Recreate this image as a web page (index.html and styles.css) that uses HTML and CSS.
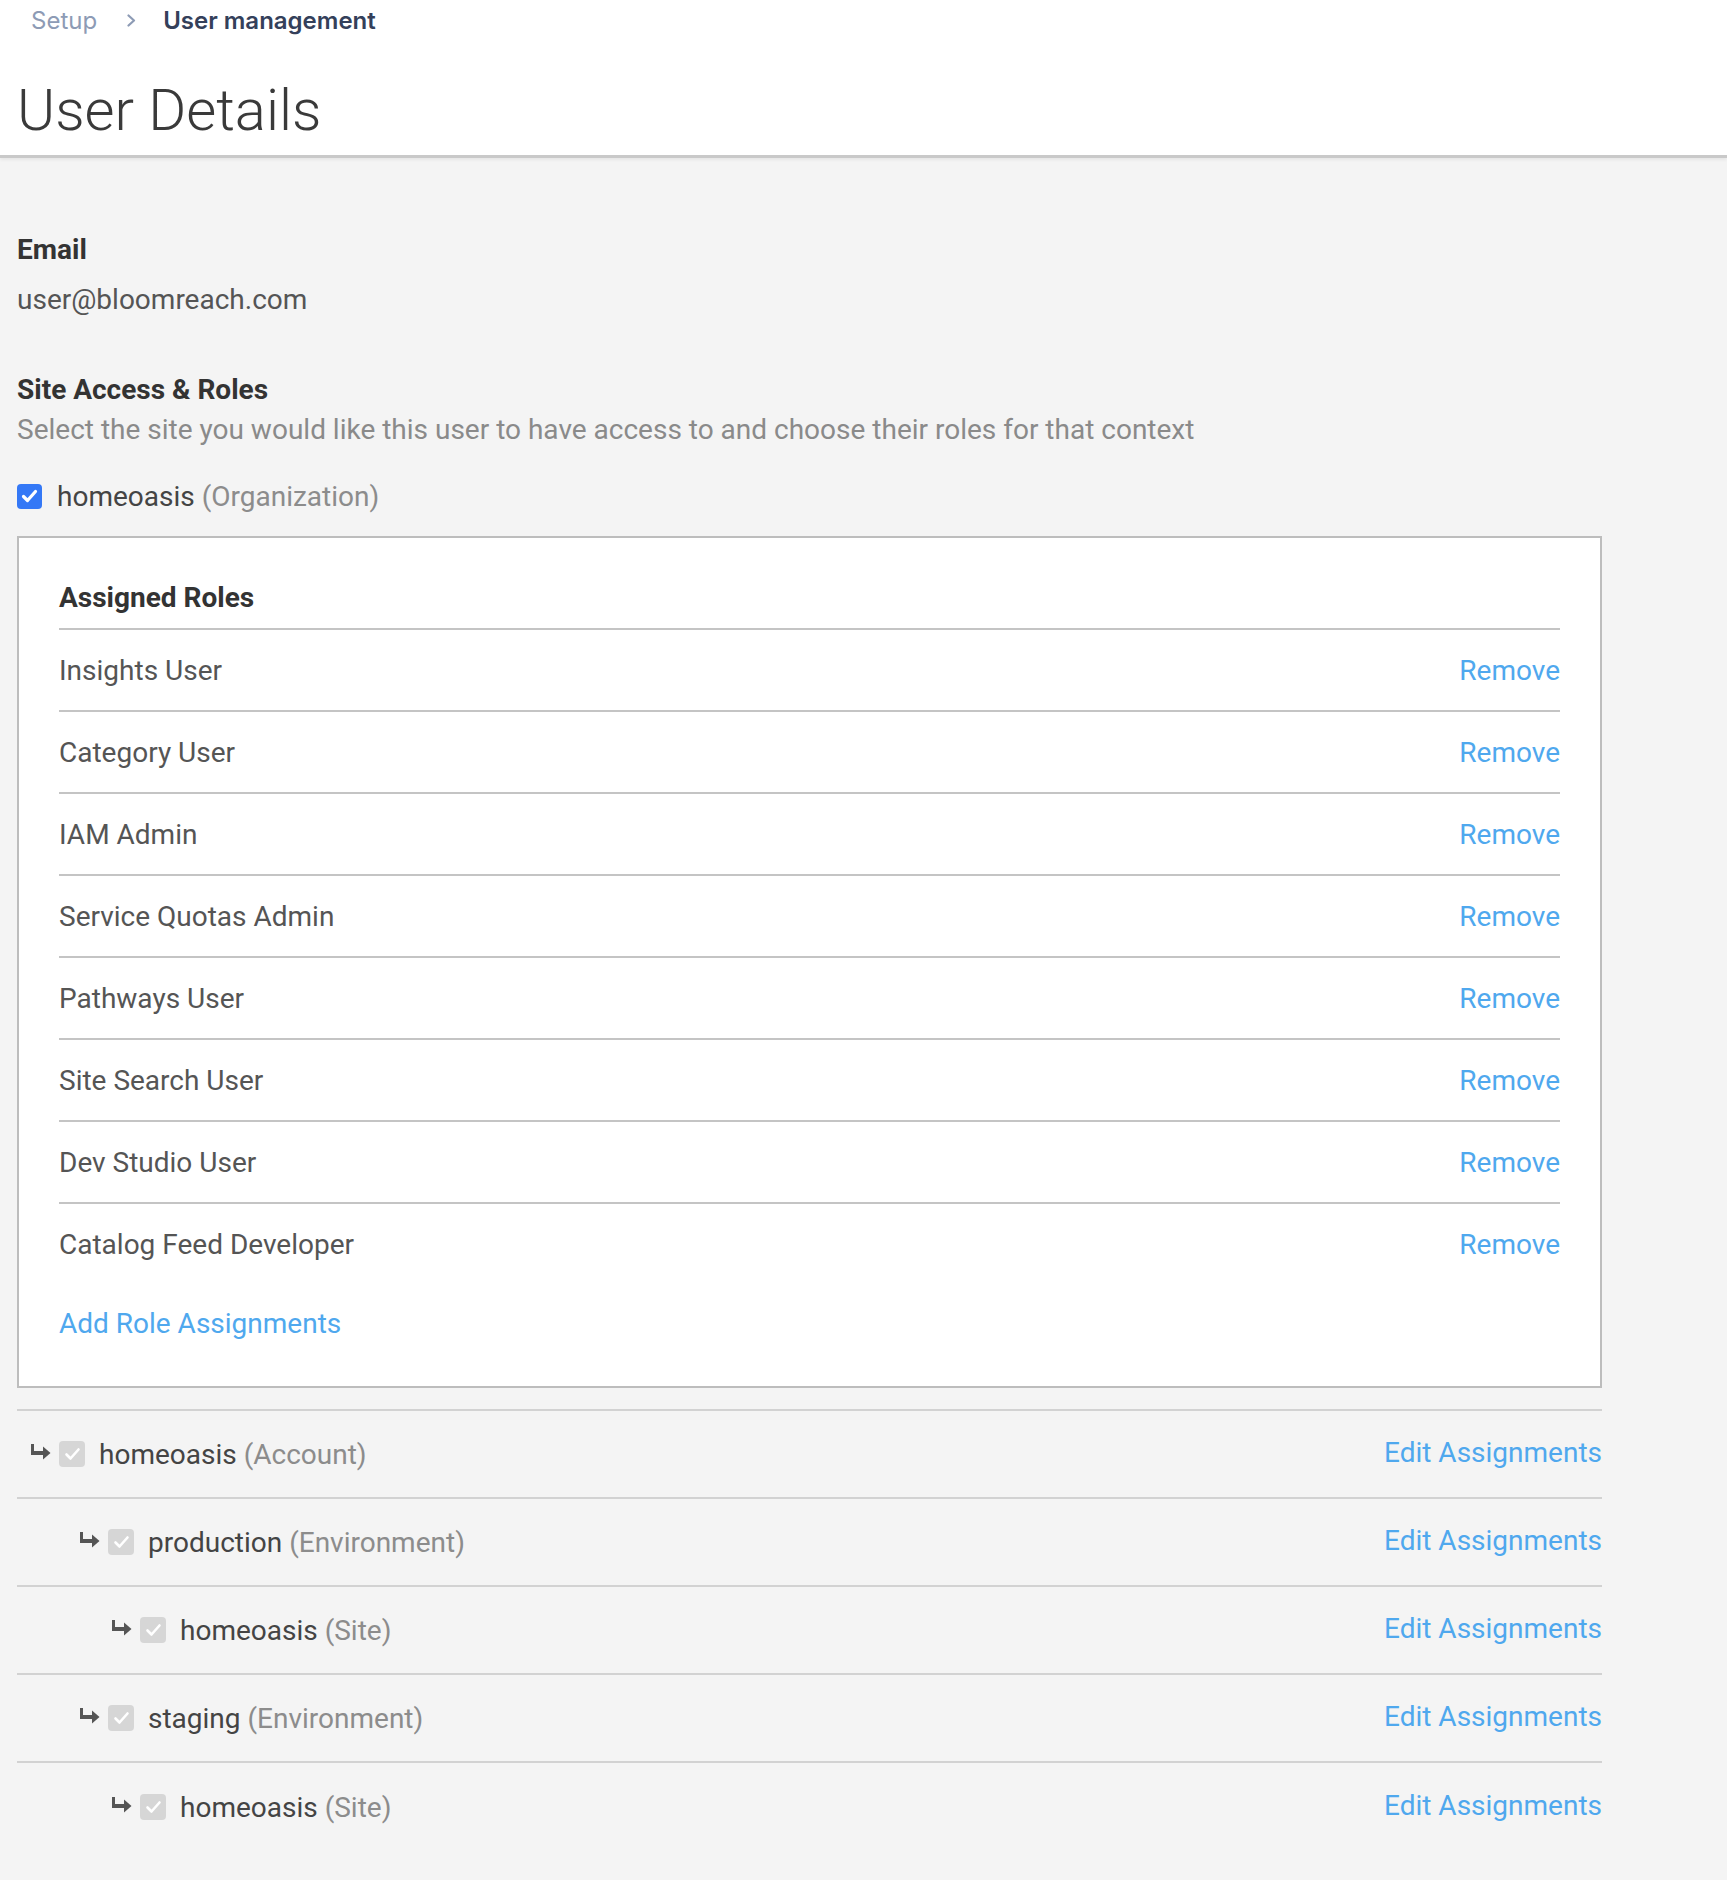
FILE: index.html
```html
<!DOCTYPE html>
<html lang="en">
<head>
<meta charset="utf-8">
<title>User Details</title>
<link rel="stylesheet" href="styles.css">
</head>
<body>
<header class="page-header">
  <nav class="breadcrumb">
    <span class="crumb">Setup</span>
    <svg class="crumb-sep" width="9" height="13" viewBox="0 0 9 13"><polyline points="1.5,1.5 7,6.5 1.5,11.5" fill="none" stroke="#8d9bb5" stroke-width="2.2" stroke-linecap="round" stroke-linejoin="round"/></svg>
    <span class="crumb current">User management</span>
  </nav>
  <h1 class="page-title">User Details</h1>
</header>

<main class="content">
  <section class="field">
    <h2 class="label">Email</h2>
    <p class="value">user@bloomreach.com</p>
  </section>

  <section class="access">
    <h2 class="label">Site Access &amp; Roles</h2>
    <p class="hint">Select the site you would like this user to have access to and choose their roles for that context</p>

    <div class="org-row">
      <span class="check check-on">
        <svg width="17" height="14" viewBox="0 0 17 14"><polyline points="2.5,7.5 6.5,11.5 14.5,2.5" fill="none" stroke="#fff" stroke-width="3.2" stroke-linecap="round" stroke-linejoin="round"/></svg>
      </span>
      <span class="name">homeoasis <span class="kind">(Organization)</span></span>
    </div>

    <div class="roles-box">
      <h3 class="roles-title">Assigned Roles</h3>
      <ul class="roles">
        <li class="role"><span>Insights User</span><a class="link">Remove</a></li>
        <li class="role"><span>Category User</span><a class="link">Remove</a></li>
        <li class="role"><span>IAM Admin</span><a class="link">Remove</a></li>
        <li class="role"><span>Service Quotas Admin</span><a class="link">Remove</a></li>
        <li class="role"><span>Pathways User</span><a class="link">Remove</a></li>
        <li class="role"><span>Site Search User</span><a class="link">Remove</a></li>
        <li class="role"><span>Dev Studio User</span><a class="link">Remove</a></li>
        <li class="role"><span>Catalog Feed Developer</span><a class="link">Remove</a></li>
      </ul>
      <a class="link add-link">Add Role Assignments</a>
    </div>

    <ul class="tree">
      <li class="tree-row level-1">
        <div class="tree-item">
          <svg class="branch" width="20" height="16" viewBox="0 0 20 16"><rect x="0" y="0" width="3" height="11" fill="#555"/><rect x="0" y="7" width="13" height="4" fill="#555"/><polygon points="12,2.5 19.5,9 12,15.5" fill="#555"/></svg>
          <span class="check check-off"><svg width="17" height="14" viewBox="0 0 17 14"><polyline points="2.5,7.5 6.5,11.5 14.5,2.5" fill="none" stroke="#fff" stroke-width="2.6" stroke-linecap="round" stroke-linejoin="round"/></svg></span>
          <span class="name">homeoasis <span class="kind">(Account)</span></span>
        </div>
        <a class="link edit-link">Edit Assignments</a>
      </li>
      <li class="tree-row level-2">
        <div class="tree-item">
          <svg class="branch" width="20" height="16" viewBox="0 0 20 16"><rect x="0" y="0" width="3" height="11" fill="#555"/><rect x="0" y="7" width="13" height="4" fill="#555"/><polygon points="12,2.5 19.5,9 12,15.5" fill="#555"/></svg>
          <span class="check check-off"><svg width="17" height="14" viewBox="0 0 17 14"><polyline points="2.5,7.5 6.5,11.5 14.5,2.5" fill="none" stroke="#fff" stroke-width="2.6" stroke-linecap="round" stroke-linejoin="round"/></svg></span>
          <span class="name">production <span class="kind">(Environment)</span></span>
        </div>
        <a class="link edit-link">Edit Assignments</a>
      </li>
      <li class="tree-row level-3">
        <div class="tree-item">
          <svg class="branch" width="20" height="16" viewBox="0 0 20 16"><rect x="0" y="0" width="3" height="11" fill="#555"/><rect x="0" y="7" width="13" height="4" fill="#555"/><polygon points="12,2.5 19.5,9 12,15.5" fill="#555"/></svg>
          <span class="check check-off"><svg width="17" height="14" viewBox="0 0 17 14"><polyline points="2.5,7.5 6.5,11.5 14.5,2.5" fill="none" stroke="#fff" stroke-width="2.6" stroke-linecap="round" stroke-linejoin="round"/></svg></span>
          <span class="name">homeoasis <span class="kind">(Site)</span></span>
        </div>
        <a class="link edit-link">Edit Assignments</a>
      </li>
      <li class="tree-row level-2">
        <div class="tree-item">
          <svg class="branch" width="20" height="16" viewBox="0 0 20 16"><rect x="0" y="0" width="3" height="11" fill="#555"/><rect x="0" y="7" width="13" height="4" fill="#555"/><polygon points="12,2.5 19.5,9 12,15.5" fill="#555"/></svg>
          <span class="check check-off"><svg width="17" height="14" viewBox="0 0 17 14"><polyline points="2.5,7.5 6.5,11.5 14.5,2.5" fill="none" stroke="#fff" stroke-width="2.6" stroke-linecap="round" stroke-linejoin="round"/></svg></span>
          <span class="name">staging <span class="kind">(Environment)</span></span>
        </div>
        <a class="link edit-link">Edit Assignments</a>
      </li>
      <li class="tree-row level-3">
        <div class="tree-item">
          <svg class="branch" width="20" height="16" viewBox="0 0 20 16"><rect x="0" y="0" width="3" height="11" fill="#555"/><rect x="0" y="7" width="13" height="4" fill="#555"/><polygon points="12,2.5 19.5,9 12,15.5" fill="#555"/></svg>
          <span class="check check-off"><svg width="17" height="14" viewBox="0 0 17 14"><polyline points="2.5,7.5 6.5,11.5 14.5,2.5" fill="none" stroke="#fff" stroke-width="2.6" stroke-linecap="round" stroke-linejoin="round"/></svg></span>
          <span class="name">homeoasis <span class="kind">(Site)</span></span>
        </div>
        <a class="link edit-link">Edit Assignments</a>
      </li>
    </ul>
  </section>
</main>
</body>
</html>
```

FILE: styles.css
```css
* {
  box-sizing: border-box;
}

html, body {
  margin: 0;
  padding: 0;
}

body {
  background: #f4f4f4;
  font-family: Roboto, "Liberation Sans", sans-serif;
  font-size: 28px;
  color: #555;
  min-height: 1880px;
}

.page-header {
  background: #fff;
  border-bottom: 3px solid #c9c9c9;
  box-shadow: 0 2px 3px rgba(0, 0, 0, 0.06);
  padding: 0 17px 10px 17px;
}

.breadcrumb {
  height: 40px;
  display: flex;
  align-items: center;
  padding-left: 14px;
  font-family: Inter, "Noto Sans", sans-serif;
  font-size: 24px;
}

.crumb {
  color: #8d9bb5;
}

.crumb.current {
  color: #34405a;
  font-weight: 600;
}

.crumb-sep {
  margin: 0 27px 0 30px;
}

.page-title {
  margin: 35px 0 0 0;
  font-size: 58px;
  font-weight: 300;
  line-height: 70px;
  color: #3a3a3a;
}

.content {
  width: 1619px;
  padding: 72px 17px 0 17px;
}

.label {
  margin: 0;
  font-size: 28px;
  font-weight: 700;
  line-height: 40px;
  color: #333;
}

.value {
  margin: 10px 0 0 0;
  line-height: 40px;
  color: #555;
}

.access {
  margin-top: 50px;
}

.hint {
  margin: 0;
  line-height: 40px;
  color: #8a8a8a;
}

.org-row {
  margin-top: 26px;
  height: 40px;
  display: flex;
  align-items: center;
  gap: 15px;
}

.check {
  display: flex;
  align-items: center;
  justify-content: center;
  border-radius: 4px;
  flex: none;
}

.check-on {
  width: 25px;
  height: 25px;
  background: #3478f6;
}

.check-off {
  width: 26px;
  height: 26px;
  background: #d6d6d6;
}

.name {
  color: #444;
}

.kind {
  color: #8c8c8c;
}

.roles-box {
  margin-top: 20px;
  background: #fff;
  border: 2px solid #bdbdbd;
  padding: 40px 40px 42px 40px;
}

.roles-title {
  margin: 0;
  padding-bottom: 10px;
  font-size: 28px;
  font-weight: 700;
  line-height: 40px;
  color: #333;
  border-bottom: 2px solid #c4c4c4;
}

.roles {
  list-style: none;
  margin: 0;
  padding: 0;
}

.role {
  height: 82px;
  display: flex;
  align-items: center;
  justify-content: space-between;
  border-bottom: 2px solid #c4c4c4;
  color: #555;
}

.role:last-child {
  height: 80px;
  border-bottom: none;
}

.link {
  color: #4fa8ee;
  cursor: pointer;
}

.add-link {
  display: block;
  margin-top: 20px;
  line-height: 40px;
}

.tree {
  list-style: none;
  margin: 21px 0 0 0;
  padding: 0;
  border-top: 2px solid #d2d2d2;
}

.tree-row {
  height: 88px;
  display: flex;
  align-items: center;
  justify-content: space-between;
  border-bottom: 2px solid #d2d2d2;
}

.tree-row:last-child {
  border-bottom: none;
}

.tree-item {
  display: flex;
  align-items: center;
}

.level-1 .tree-item {
  padding-left: 14px;
}

.level-2 .tree-item {
  padding-left: 63px;
}

.level-3 .tree-item {
  padding-left: 95px;
}

.branch {
  flex: none;
  margin: 0 8px 4px 0;
}

.tree-item .check {
  margin-right: 14px;
}

.edit-link {
  margin-bottom: 4px;
}
```
